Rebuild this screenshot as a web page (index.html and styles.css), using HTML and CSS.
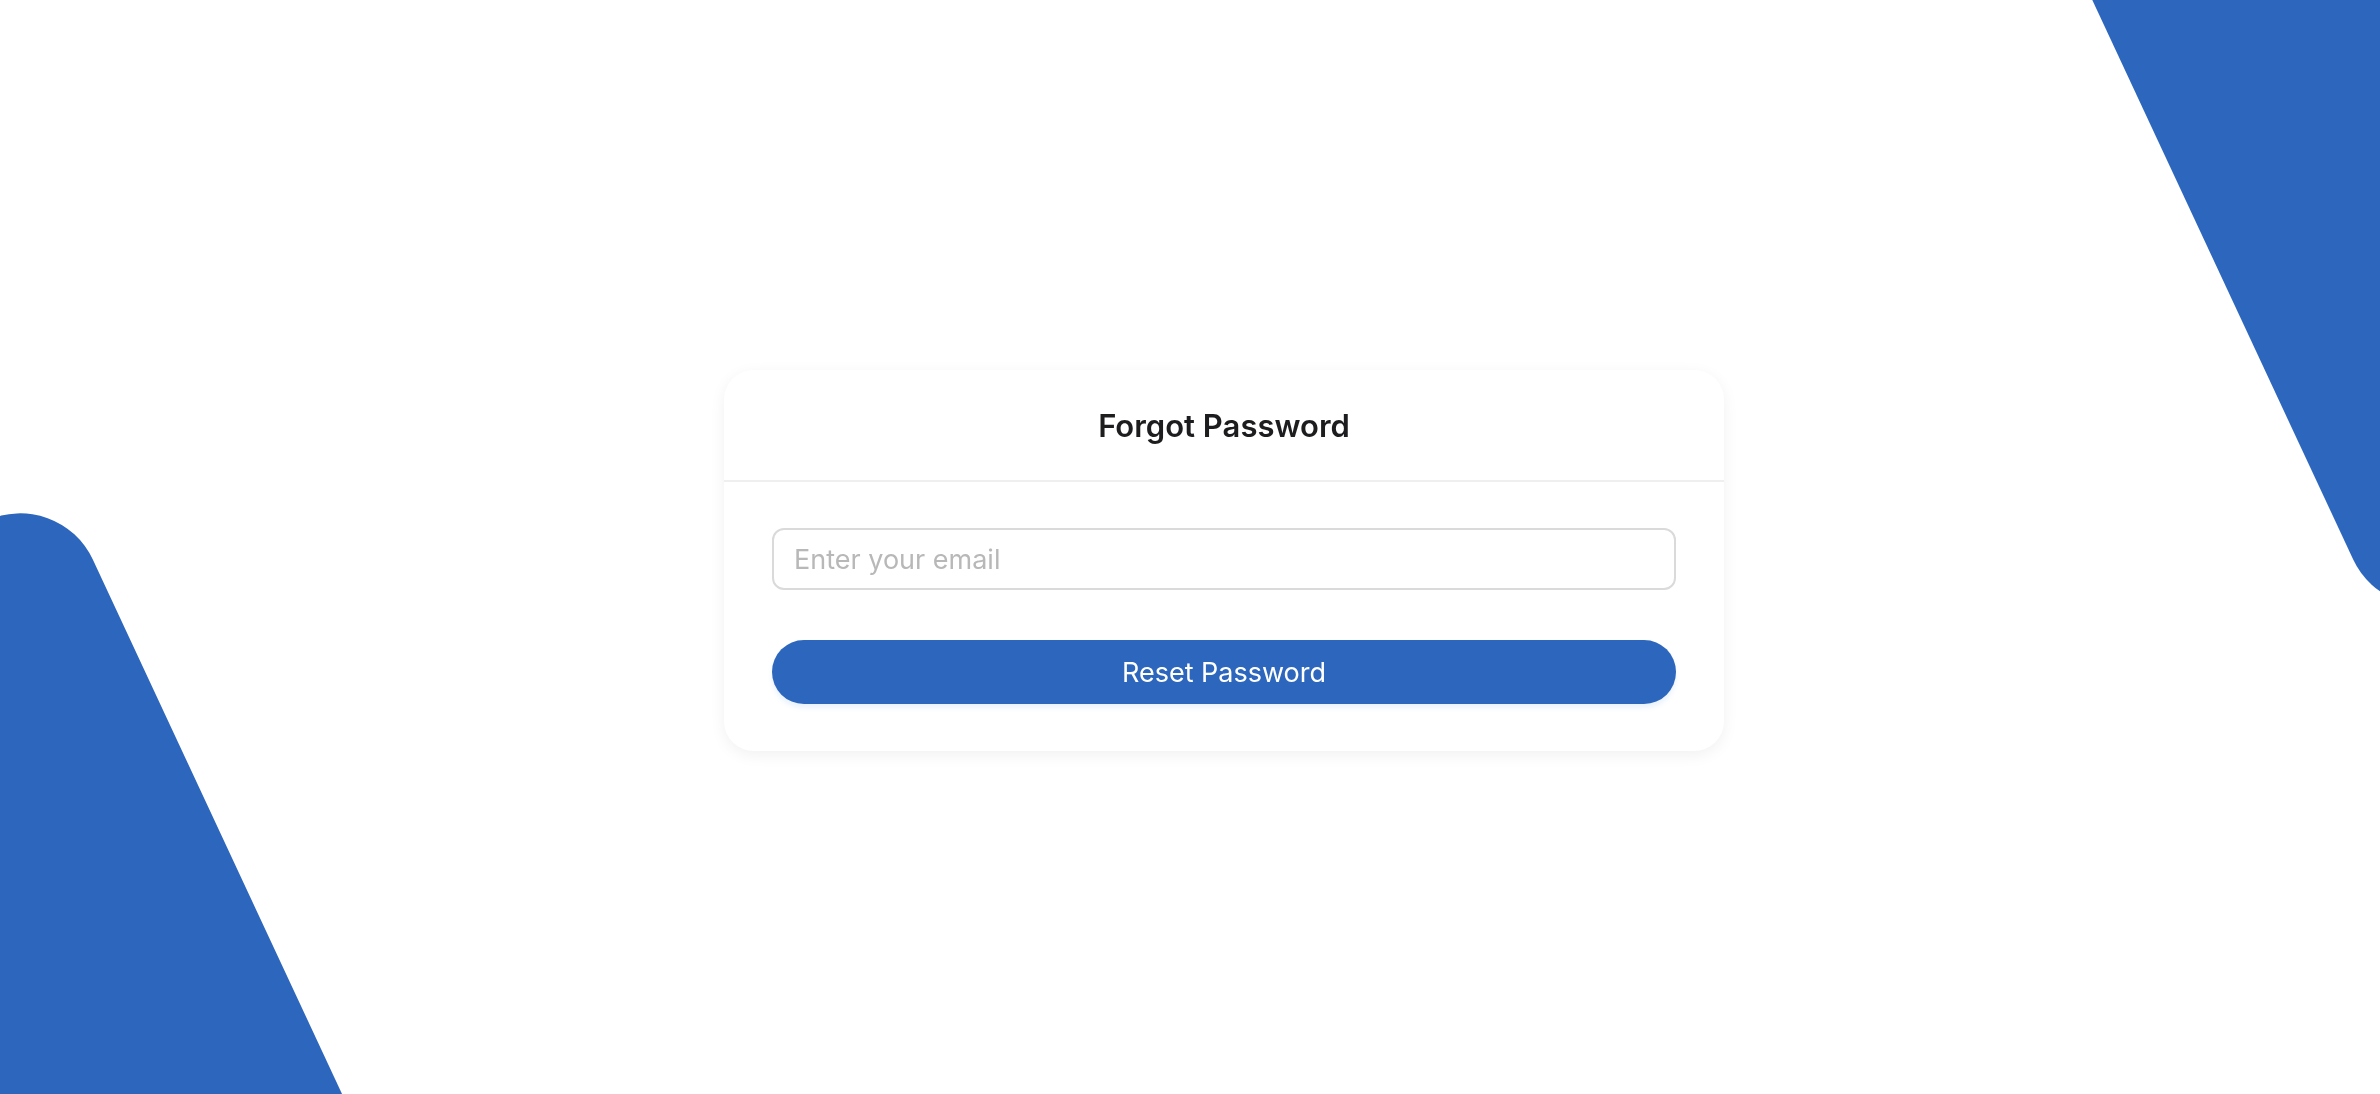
FILE: index.html
```html
<!DOCTYPE html>
<html lang="en">
<head>
    <meta charset="UTF-8">
    <meta name="viewport" content="width=device-width, initial-scale=1.0">
    <title>Forgot Password</title>
    <link rel="stylesheet" href="styles.css">
</head>
<body>
    <div class="backdrop">
        <div class="shape shape-left"></div>
        <div class="shape shape-right"></div>
    </div>

    <main class="page">
        <div class="card">
            <div class="card-header">
                <h2>Forgot Password</h2>
            </div>
            <form class="card-body" onsubmit="return false;">
                <input type="email" class="email-input" placeholder="Enter your email">
                <button type="submit" class="reset-btn">Reset Password</button>
            </form>
        </div>
    </main>
</body>
</html>
```

FILE: styles.css
```css
html, body {
    margin: 0;
    height: 100%;
}

body {
    font-family: Inter, "Noto Sans", Arial, sans-serif;
    background-color: #fff;
    color: #1d1d1f;
    overflow: hidden;
}

/* background shapes */
.backdrop {
    position: fixed;
    top: 0;
    left: 0;
    right: 0;
    bottom: 0;
    overflow: hidden;
    z-index: 0;
}

.shape {
    position: absolute;
    width: 700px;
    height: 900px;
    background-color: #2d66bd;
    border-radius: 0;
}

.shape-left {
    left: -641px;
    top: 487px;
    border-top-right-radius: 80px;
    transform-origin: top right;
    transform: rotate(-25deg);
}

.shape-right {
    left: 2387px;
    top: -268px;
    border-bottom-left-radius: 80px;
    transform-origin: bottom left;
    transform: rotate(-25deg);
}

.page {
    position: relative;
    z-index: 1;
    height: 100%;
    box-sizing: border-box;
    display: flex;
    align-items: center;
    justify-content: center;
    padding: 27px 0 0 68px;
}

.card {
    width: 1000px;
    background-color: #fff;
    border-radius: 30px;
    box-shadow: 0 4px 16px rgba(0, 0, 0, 0.06);
}

.card-header {
    height: 110px;
    display: flex;
    align-items: center;
    justify-content: center;
    border-bottom: 2px solid #efefef;
}

.card-header h2 {
    margin: 0;
    font-size: 31px;
    font-weight: 600;
    color: #1d1d1f;
}

.card-body {
    display: flex;
    flex-direction: column;
    gap: 50px;
    padding: 46px 48px 47px;
}

.email-input {
    height: 62px;
    box-sizing: border-box;
    padding: 0 20px;
    border: 2px solid #dadada;
    border-radius: 12px;
    font-family: inherit;
    font-size: 27px;
    color: #333;
    outline: none;
}

.email-input::placeholder {
    color: #b8b8b8;
}

.reset-btn {
    height: 64px;
    border: none;
    border-radius: 32px;
    background-color: #2d66bd;
    color: #fff;
    font-family: inherit;
    font-size: 27px;
    cursor: pointer;
    box-shadow: 0 4px 5px rgba(45, 130, 230, 0.1);
}

.reset-btn:hover {
    background-color: #285ba9;
}
```
